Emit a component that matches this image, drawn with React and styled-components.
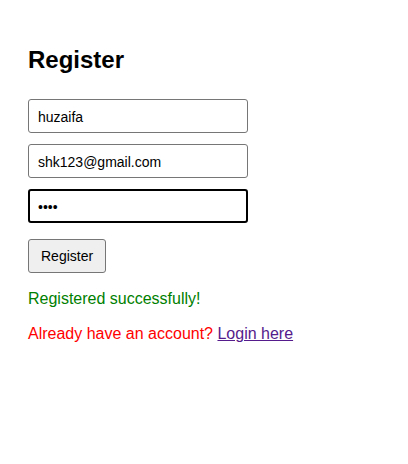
import styled, { createGlobalStyle } from "styled-components";

const GlobalStyle = createGlobalStyle`
  body {
    margin: 0;
    background: #fff;
    font-family: "Liberation Sans", Arial, sans-serif;
  }
`;

const Page = styled.div`
  padding: 28px 28px;
`;

const Title = styled.h2`
  font-size: 24px;
  font-weight: bold;
  line-height: 28px;
  margin: 18px 0 25px;
  color: #000;
`;

const Form = styled.form`
  display: flex;
  flex-direction: column;
  align-items: flex-start;
  gap: 11px;
`;

const Input = styled.input`
  box-sizing: border-box;
  width: 220px;
  height: 34px;
  padding: 1px 9px 0;
  font-family: "Liberation Sans", Arial, sans-serif;
  font-size: 14px;
  color: #000;
  background: #fff;
  border: ${(p) => (p.$active ? "2px solid #000" : "1px solid #767676")};
  padding-left: ${(p) => (p.$active ? "8px" : "9px")};
  border-radius: 3px;
  outline: none;
`;

const Button = styled.button`
  box-sizing: border-box;
  margin-top: 5px;
  height: 34px;
  padding: 0 12px;
  font-family: "Liberation Sans", Arial, sans-serif;
  font-size: 14px;
  color: #000;
  background: #efefef;
  border: 1px solid #767676;
  border-radius: 3px;
`;

const Message = styled.p`
  margin: 17px 0 0;
  font-size: 16px;
  line-height: 18px;
  color: ${(p) => p.$color};
`;

const LinkText = styled.a`
  color: #551a8b;
  text-decoration: underline;
`;

export default function App() {
  return (
    <>
      <GlobalStyle />
      <Page>
        <Title>Register</Title>
        <Form onSubmit={(e) => e.preventDefault()}>
          <Input type="text" defaultValue="huzaifa" />
          <Input type="email" defaultValue="shk123@gmail.com" />
          <Input type="password" defaultValue="1234" $active />
          <Button type="submit">Register</Button>
        </Form>
        <Message $color="#008000">Registered successfully!</Message>
        <Message $color="#ff0000">
          Already have an account? <LinkText href="#login">Login here</LinkText>
        </Message>
      </Page>
    </>
  );
}
